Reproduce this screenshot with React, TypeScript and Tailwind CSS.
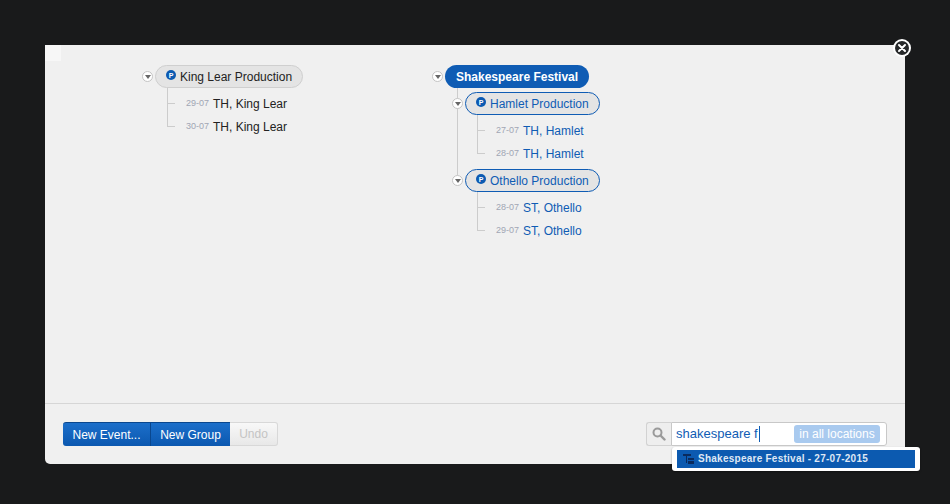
import React from 'react'

const BLUE = 'text-[#0f5cb4]'

function Toggle() {
  return (
    <span className="relative z-10 mr-[2px] flex h-[11px] w-[11px] shrink-0 items-center justify-center rounded-full border border-[#c4c4c4] bg-white">
      <span className="mt-[1px] h-0 w-0 border-x-[3px] border-t-[4px] border-x-transparent border-t-[#666]" />
    </span>
  )
}

function ProdIcon() {
  return (
    <span className="mb-[3px] mr-[4px] flex h-[10px] w-[10px] shrink-0 items-center justify-center rounded-full bg-[#0c5ab2] text-[7px] font-bold leading-none text-white">
      P
    </span>
  )
}

function Pill({ label, selected }: { label: string; selected?: boolean }) {
  return (
    <div className="flex h-[23px] items-center">
      <Toggle />
      <div
        className={
          selected
            ? 'flex h-[23px] items-center rounded-full border border-[#0f5cb4] bg-[#e4e4e4] px-[10px] text-[12px] text-[#0f5cb4]'
            : 'flex h-[23px] items-center rounded-full border border-[#cfcfcf] bg-[#e4e4e4] px-[10px] text-[12px] text-[#222]'
        }
      >
        <ProdIcon />
        <span>{label}</span>
      </div>
    </div>
  )
}

function Leaf({ date, label, blue }: { date: string; label: string; blue?: boolean }) {
  return (
    <div className="relative flex h-[23px] items-center pl-[44px]">
      <span className="absolute left-[25px] top-[11px] h-px w-[8px] bg-[#cccccc]" />
      <span className="mt-[1px] w-[27px] shrink-0 text-[9px] text-[#a0a6b4]">{date}</span>
      <span className={blue ? `text-[12px] ${BLUE}` : 'text-[12px] text-[#222]'}>{label}</span>
    </div>
  )
}

function Production({
  label,
  selected,
  leaves,
}: {
  label: string
  selected?: boolean
  leaves: [string, string][]
}) {
  return (
    <div>
      <Pill label={label} selected={selected} />
      <div className="relative py-[4px]">
        <span className="absolute left-[25px] top-0 h-[38px] w-px bg-[#cccccc]" />
        {leaves.map(([d, l]) => (
          <Leaf key={d + l} date={d} label={l} blue={selected} />
        ))}
      </div>
    </div>
  )
}

export default function App() {
  return (
    <div className="h-[504px] w-[950px] overflow-hidden bg-[#191a1b] pl-[45px] pt-[45px] font-['Liberation_Sans',Arial,sans-serif]">
      <div className="relative flex h-[419px] w-[860px] flex-col rounded-b-[5px] bg-[#f0f0f0]">
        <span className="absolute left-0 top-0 h-[16px] w-[16px] bg-[#f7f7f7]" />

        {/* close */}
        <button className="absolute right-[-6px] top-[-6px] flex h-[18px] w-[18px] items-center justify-center rounded-full bg-white">
          <span className="flex h-[14px] w-[14px] items-center justify-center rounded-full bg-[#26282a]">
            <svg width="10" height="10" viewBox="0 0 10 10">
              <path d="M2 2l6 6M8 2l-6 6" stroke="#fff" strokeWidth="2" strokeLinecap="round" />
            </svg>
          </span>
        </button>

        {/* trees */}
        <div className="flex flex-1 items-start pl-[97px] pt-[20px]">
          <div className="w-[290px]">
            <Production
              label="King Lear Production"
              leaves={[
                ['29-07', 'TH, King Lear'],
                ['30-07', 'TH, King Lear'],
              ]}
            />
          </div>
          <div>
            <div className="flex h-[23px] items-center">
              <Toggle />
              <div className="flex h-[23px] items-center rounded-full bg-[#0f5cb4] px-[11px] text-[12px] font-bold text-white">
                Shakespeare Festival
              </div>
            </div>
            <div className="relative pl-[20px] pt-[4px]">
              <span className="absolute left-[25px] top-0 h-[92px] w-px bg-[#cccccc]" />
              <Production
                label="Hamlet Production"
                selected
                leaves={[
                  ['27-07', 'TH, Hamlet'],
                  ['28-07', 'TH, Hamlet'],
                ]}
              />
              <Production
                label="Othello Production"
                selected
                leaves={[
                  ['28-07', 'ST, Othello'],
                  ['29-07', 'ST, Othello'],
                ]}
              />
            </div>
          </div>
        </div>

        {/* footer */}
        <div className="flex h-[61px] items-center justify-between border-t border-[#d6d6d6] px-[18px]">
          <div className="flex h-[24px] text-[12px]">
            <button className="w-[88px] rounded-l-[3px] border-r border-t border-[#0a478e] bg-gradient-to-b from-[#1c6fca] to-[#0b58b0] text-white">
              New Event...
            </button>
            <button className="w-[79px] border-t border-[#0a478e] bg-gradient-to-b from-[#1c6fca] to-[#0b58b0] text-white">
              New Group
            </button>
            <button className="w-[48px] rounded-r-[3px] border border-l-0 border-[#d8d8d8] bg-gradient-to-b from-[#f8f8f8] to-[#e8e8e8] text-[#c4c4c4]">
              Undo
            </button>
          </div>

          <div className="relative flex h-[24px]">
            <span className="flex w-[25px] items-center justify-center rounded-l-[3px] border border-r-0 border-[#d2d2d2] bg-[#eeeeee]">
              <svg width="14" height="14" viewBox="0 0 14 14" fill="none">
                <circle cx="5.5" cy="5.5" r="4" stroke="#9a9a9a" strokeWidth="2" />
                <path d="M8.5 8.5L12.5 12.5" stroke="#9a9a9a" strokeWidth="2.4" strokeLinecap="round" />
              </svg>
            </span>
            <div className="flex w-[216px] items-center justify-between rounded-r-[3px] border border-[#c8c8c8] bg-white pl-[4px] pr-[6px]">
              <span className="flex items-center text-[13px] text-[#0f5cb4]">
                shakespeare f
                <span className="ml-[1px] h-[16px] w-px bg-[#0f5cb4]" />
              </span>
              <span className="flex h-[18px] w-[86px] items-center justify-center rounded-[3px] bg-[#a9caef] text-[12px] text-white">
                in all locations
              </span>
            </div>

            {/* suggestions */}
            <div className="absolute left-[26px] top-[25px] z-10 h-[24px] w-[248px] rounded-[3px] bg-white p-[3px_5px] shadow-[0_1px_2px_rgba(0,0,0,0.4)]">
              <div className="flex h-[18px] items-center bg-[#0c5ab0] pl-[6px]">
                <svg width="12" height="12" viewBox="0 0 12 12" className="mr-[3px] shrink-0" fill="#0a2a5c">
                  <path d="M0 1h8v2H0zM3 3h1v7H3zM5 5h6v2H5zM5 8h6v3H5z" />
                </svg>
                <span className="mb-[1px] text-[10px] font-bold tracking-[0.25px] text-[#dfe8f5]">
                  Shakespeare Festival - 27-07-2015
                </span>
              </div>
            </div>
          </div>
        </div>
      </div>
    </div>
  )
}
